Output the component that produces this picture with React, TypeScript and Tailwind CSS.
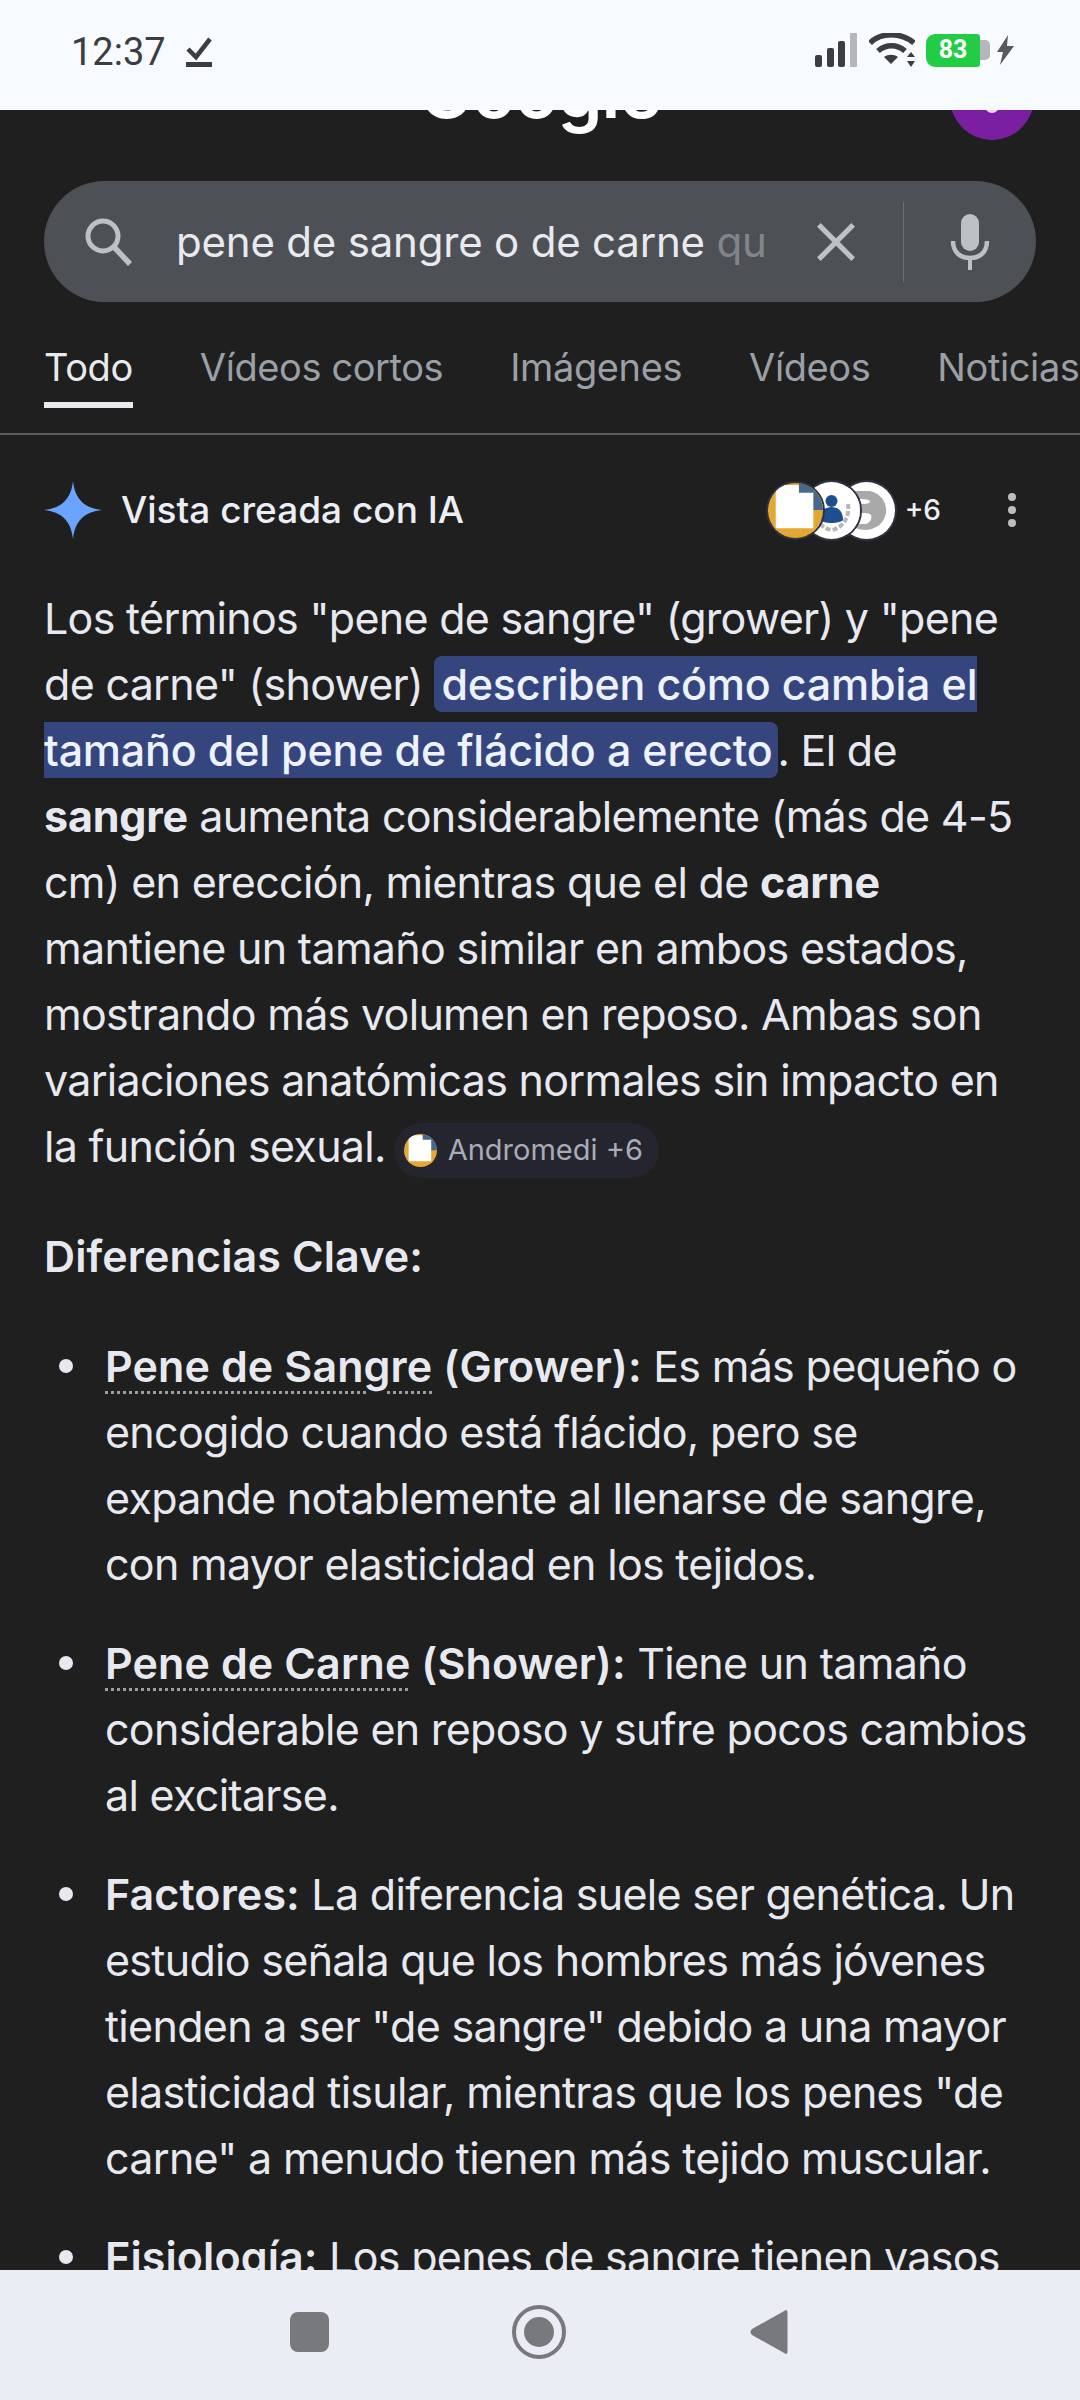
import React from "react";

const Mark = ({ children }: { children: React.ReactNode }) => (
  <span className="rounded-[8px] bg-[#35467f] py-[2px] pl-[7px] pr-[5px] font-medium tracking-[-0.2px] text-[#eef1ff]">
    {children}
  </span>
);

const Term = ({ children }: { children: React.ReactNode }) => (
  <span className="underline decoration-dotted decoration-[#9aa0a6] decoration-[3px] underline-offset-[9px]">
    {children}
  </span>
);

// site favicons in the source stack
const FaviconOrange = ({ size }: { size: number }) => (
  <svg width={size} height={size} viewBox="0 0 57 57" className="block">
    <clipPath id={`fav-${size}`}>
      <circle cx="28.5" cy="28.5" r="28.5" />
    </clipPath>
    <g clipPath={`url(#fav-${size})`}>
      <rect width="57" height="57" fill="#e3a834" />
      <rect x="32" width="25" height="28" fill="#47698c" />
      <path d="M8 2h24v8h15v37H8z" fill="#fff" />
    </g>
  </svg>
);

const FaviconLaurel = () => (
  <svg width="57" height="57" viewBox="0 0 57 57" className="block">
    <circle cx="28.5" cy="28.5" r="28.5" fill="#fff" />
    <path d="M12 22c-2 14 6 24 16 26M45 22c2 14-6 24-16 26" fill="none" stroke="#b5b8bb" strokeWidth="4" strokeDasharray="5 2" />
    <circle cx="28.5" cy="19" r="6" fill="#1d4f8f" />
    <path d="M17 38c0-10 6-13 11.500-13S40 28 40 38c-3 4-20 4-23 0z" fill="#1d4f8f" />
  </svg>
);

const FaviconGray = () => (
  <svg width="57" height="57" viewBox="0 0 57 57" className="block">
    <circle cx="28.5" cy="28.500" r="28.500" fill="#fff" />
    <path d="M16 9h16c12 3 17 12 16 22-2 10-9 16-20 17-8 0-12-3-14-6h14c5-2 6-6 5-9-2-2-6-2-12-2v-9c6 0 9 0 11-2 0-3-5-3-14-3z" fill="#a9a9a9" />
  </svg>
);

const StatusIcons = () => (
  <div className="flex items-center">
    <svg width="44" height="34" viewBox="0 0 44 34" className="mr-[10px]">
      <rect x="0" y="22" width="7" height="12" rx="2" fill="#3c3d40" />
      <rect x="12" y="15" width="7" height="19" rx="2" fill="#3c3d40" />
      <rect x="23" y="8" width="7" height="26" rx="2" fill="#3c3d40" />
      <rect x="35" y="0" width="7" height="34" rx="1" fill="#b4b6b9" />
    </svg>
    <svg width="46" height="34" viewBox="0 0 46 34" className="mr-[11px]">
      <path d="M1 10C12 -1 32 -1 45 10" fill="none" stroke="#3c3d40" strokeWidth="5.500" />
      <path d="M9 18c8-7 19-7 27 0" fill="none" stroke="#3c3d40" strokeWidth="5.500" />
      <path d="M15 24c4-3 10-3 14 0l-7 7z" fill="#3c3d40" />
      <path d="M42 19l4 5h-8zM42 34l4-6h-8z" fill="#3c3d40" />
    </svg>
    <div className="flex h-[33px] items-center">
      <div className="flex h-[33px] w-[54px] items-center justify-center rounded-l-[9px] rounded-r-[3px] bg-[#22cc44] font-[Roboto,sans-serif] text-[25px] font-bold text-white">
        83
      </div>
      <div className="h-[20px] w-[10px] rounded-r-[5px] bg-[#b4b6b9]" />
    </div>
    <svg width="17" height="30" viewBox="0 0 17 30" className="ml-[7px]">
      <path d="M11 0L0 17h6l-3 13L17 11h-7z" fill="#57595c" />
    </svg>
  </div>
);

const Tab = ({ label, active }: { label: string; active?: boolean }) => (
  <div className="relative flex h-[88px] shrink-0 items-start pt-[17px]">
    <span className={active ? "text-[#e8eaed]" : "text-[#9aa0a6]"}>{label}</span>
    {active && <div className="absolute bottom-[2px] left-0 h-[6px] w-full bg-[#e8eaed]" />}
  </div>
);

const Bullet = () => (
  <span className="mr-[32px] mt-[26px] h-[14px] w-[14px] shrink-0 translate-x-[15px] rounded-full bg-[#e8e9f0]" />
);

const Strong = ({ children }: { children: React.ReactNode }) => (
  <b className="font-semibold tracking-[0.1px]">{children}</b>
);

export default function App() {
  return (
    <div className="flex h-[2400px] w-[1080px] flex-col overflow-hidden bg-[#1f1f1f] font-[Inter,sans-serif] text-[#e8e9f0]">
      <header className="relative z-10 flex h-[110px] shrink-0 items-start justify-between bg-[#f7faff] pl-[71px] pr-[66px] pt-[33px]">
        <div className="flex items-center gap-[20px]">
          <span className="font-[Roboto,sans-serif] text-[38px] leading-[38px] text-[#3c3d40]">12:37</span>
          <svg width="27" height="30" viewBox="0 0 27 30">
            <path d="M2 12l8 8L24 2" fill="none" stroke="#3c3d40" strokeWidth="4.500" />
            <rect y="25" width="26" height="5" fill="#3c3d40" />
          </svg>
        </div>
        <StatusIcons />
      </header>

      <main className="min-h-0 flex-1 overflow-hidden">
        <div className="relative -mt-[49px] h-[120px]">
          <div className="text-center text-[72px] font-semibold leading-[62px] tracking-[-1px] text-white">Google</div>
          <div className="absolute right-[46px] top-[-5px] flex h-[84px] w-[84px] items-end justify-center rounded-full bg-[#7b1fa2] pb-[27px]">
            <div className="h-[14px] w-[14px] rounded-full bg-[#e9d5f0]" />
          </div>
        </div>

        <div className="mx-[44px] flex h-[121px] items-center rounded-full bg-[#4d5156] pl-[39px]">
          <svg width="50" height="50" viewBox="0 0 50 50" className="shrink-0">
            <circle cx="20" cy="19" r="15" fill="none" stroke="#bdc1c6" strokeWidth="5" />
            <path d="M31 30l16 17" stroke="#bdc1c6" strokeWidth="5.500" />
          </svg>
          <div className="ml-[43px] w-[587px] shrink-0 whitespace-nowrap text-[42px] tracking-[-0.2px] text-[#e8eaed]">
            pene de sangre o de carne <span className="text-[#80868b]">qu</span>
          </div>
          <svg width="40" height="40" viewBox="0 0 42 42" className="ml-[53px] shrink-0">
            <path d="M3 3l36 36M39 3L3 39" stroke="#bdc1c6" strokeWidth="5.500" />
          </svg>
          <div className="ml-[47px] h-[80px] w-px shrink-0 bg-[#6b6f74]" />
          <svg width="40" height="56" viewBox="0 0 40 56" className="ml-[46px] shrink-0">
            <rect x="11" y="0" width="18" height="37" rx="9" fill="#bdc1c6" />
            <path d="M3 27c0 12 8 17 17 17s17-5 17-17" fill="none" stroke="#bdc1c6" strokeWidth="4.500" />
            <rect x="18" y="43" width="4" height="13" fill="#bdc1c6" />
          </svg>
        </div>

        <nav className="mt-[20px] flex h-[113px] gap-[67px] overflow-hidden border-b-2 border-[#5a5d60] pl-[44px] text-[38px] tracking-[-0.4px]">
          <Tab label="Todo" active />
          <Tab label="Vídeos cortos" />
          <Tab label="Imágenes" />
          <Tab label="Vídeos" />
          <Tab label="Noticias" />
        </nav>

        <div className="flex h-[120px] items-center pl-[44px] pr-[64px] pt-[30px]">
          <svg width="58" height="58" viewBox="0 0 58 58" className="shrink-0">
            <path d="M29 0C31 18 40 27 58 29 40 31 31 40 29 58 27 40 18 31 0 29 18 27 27 18 29 0Z" fill="#6ba4ff" />
          </svg>
          <span className="ml-[19px] text-[37px] font-medium text-[#eceef5]">Vista creada con IA</span>
          <div className="ml-auto flex items-center">
            <div className="z-30 rounded-full border-2 border-[#2e3140]"><FaviconOrange size={55} /></div>
            <div className="z-20 -ml-[24px] rounded-full border-2 border-[#2e3140]"><FaviconLaurel /></div>
            <div className="z-10 -ml-[26px] rounded-full border-2 border-[#2e3140]"><FaviconGray /></div>
            <span className="ml-[8px] text-[28px] font-medium text-[#eceef5]">+6</span>
            <div className="ml-[67px] flex flex-col gap-[5px]">
              <div className="h-[8px] w-[8px] rounded-full bg-[#bdbdbd]" />
              <div className="h-[8px] w-[8px] rounded-full bg-[#bdbdbd]" />
              <div className="h-[8px] w-[8px] rounded-full bg-[#bdbdbd]" />
            </div>
          </div>
        </div>

        <section className="mt-[30px] whitespace-nowrap px-[44px] text-[43px] leading-[66px] tracking-[-0.7px]">
          <p>
            Los términos "pene de sangre" (grower) y "pene<br />
            de carne" (shower) <Mark>describen cómo cambia el<br />
            tamaño del pene de flácido a erecto</Mark>. El de<br />
            <b className="font-bold tracking-[-0.2px]">sangre</b> aumenta considerablemente (más de 4-5<br />
            cm) en erección, mientras que el de <b className="font-bold tracking-[-0.2px]">carne</b><br />
            mantiene un tamaño similar en ambos estados,<br />
            mostrando más volumen en reposo. Ambas son<br />
            variaciones anatómicas normales sin impacto en<br />
            la función sexual.
            <span className="ml-[8px] inline-flex h-[55px] items-center gap-[11px] rounded-full bg-[#24252e] pl-[10px] pr-[16px] align-middle text-[29px] tracking-normal text-[#a9abb8]">
              <FaviconOrange size={33} />
              Andromedi +6
            </span>
          </p>

          <h2 className="mt-[44px] font-semibold leading-[66px] tracking-[0.1px]">Diferencias Clave:</h2>

          <ul className="mt-[44px] flex flex-col gap-[33px]">
            <li className="flex">
              <Bullet />
              <div className="pl-[15px]">
                <Strong><Term>Pene de Sangre</Term> (Grower):</Strong> Es más pequeño o<br />
                encogido cuando está flácido, pero se<br />
                expande notablemente al llenarse de sangre,<br />
                con mayor elasticidad en los tejidos.
              </div>
            </li>
            <li className="flex">
              <Bullet />
              <div className="pl-[15px]">
                <Strong><Term>Pene de Carne</Term> (Shower):</Strong> Tiene un tamaño<br />
                considerable en reposo y sufre pocos cambios<br />
                al excitarse.
              </div>
            </li>
            <li className="flex">
              <Bullet />
              <div className="pl-[15px]">
                <Strong>Factores:</Strong> La diferencia suele ser genética. Un<br />
                estudio señala que los hombres más jóvenes<br />
                tienden a ser "de sangre" debido a una mayor<br />
                elasticidad tisular, mientras que los penes "de<br />
                carne" a menudo tienen más tejido muscular.
              </div>
            </li>
            <li className="flex">
              <Bullet />
              <div className="pl-[15px]">
                <Strong>Fisiología:</Strong> Los penes de sangre tienen vasos
              </div>
            </li>
          </ul>
        </section>
      </main>

      <footer className="z-10 flex h-[130px] shrink-0 items-center bg-[#eaedf3] pb-[6px] pl-[290px]">
        <div className="h-[40px] w-[39px] rounded-[8px] bg-[#77797c]" />
        <div className="ml-[183px] flex h-[54px] w-[54px] items-center justify-center rounded-full border-[4px] border-[#77797c]">
          <div className="h-[30px] w-[30px] rounded-full bg-[#77797c]" />
        </div>
        <svg width="38" height="46" viewBox="0 0 38 46" className="ml-[184px]">
          <path d="M35 1.500c1.500-1 2.500 0 2.500 2v39c0 2-1 3-2.500 2L2 26c-2-2-2-4 0-6z" fill="#77797c" />
        </svg>
      </footer>
    </div>
  );
}
